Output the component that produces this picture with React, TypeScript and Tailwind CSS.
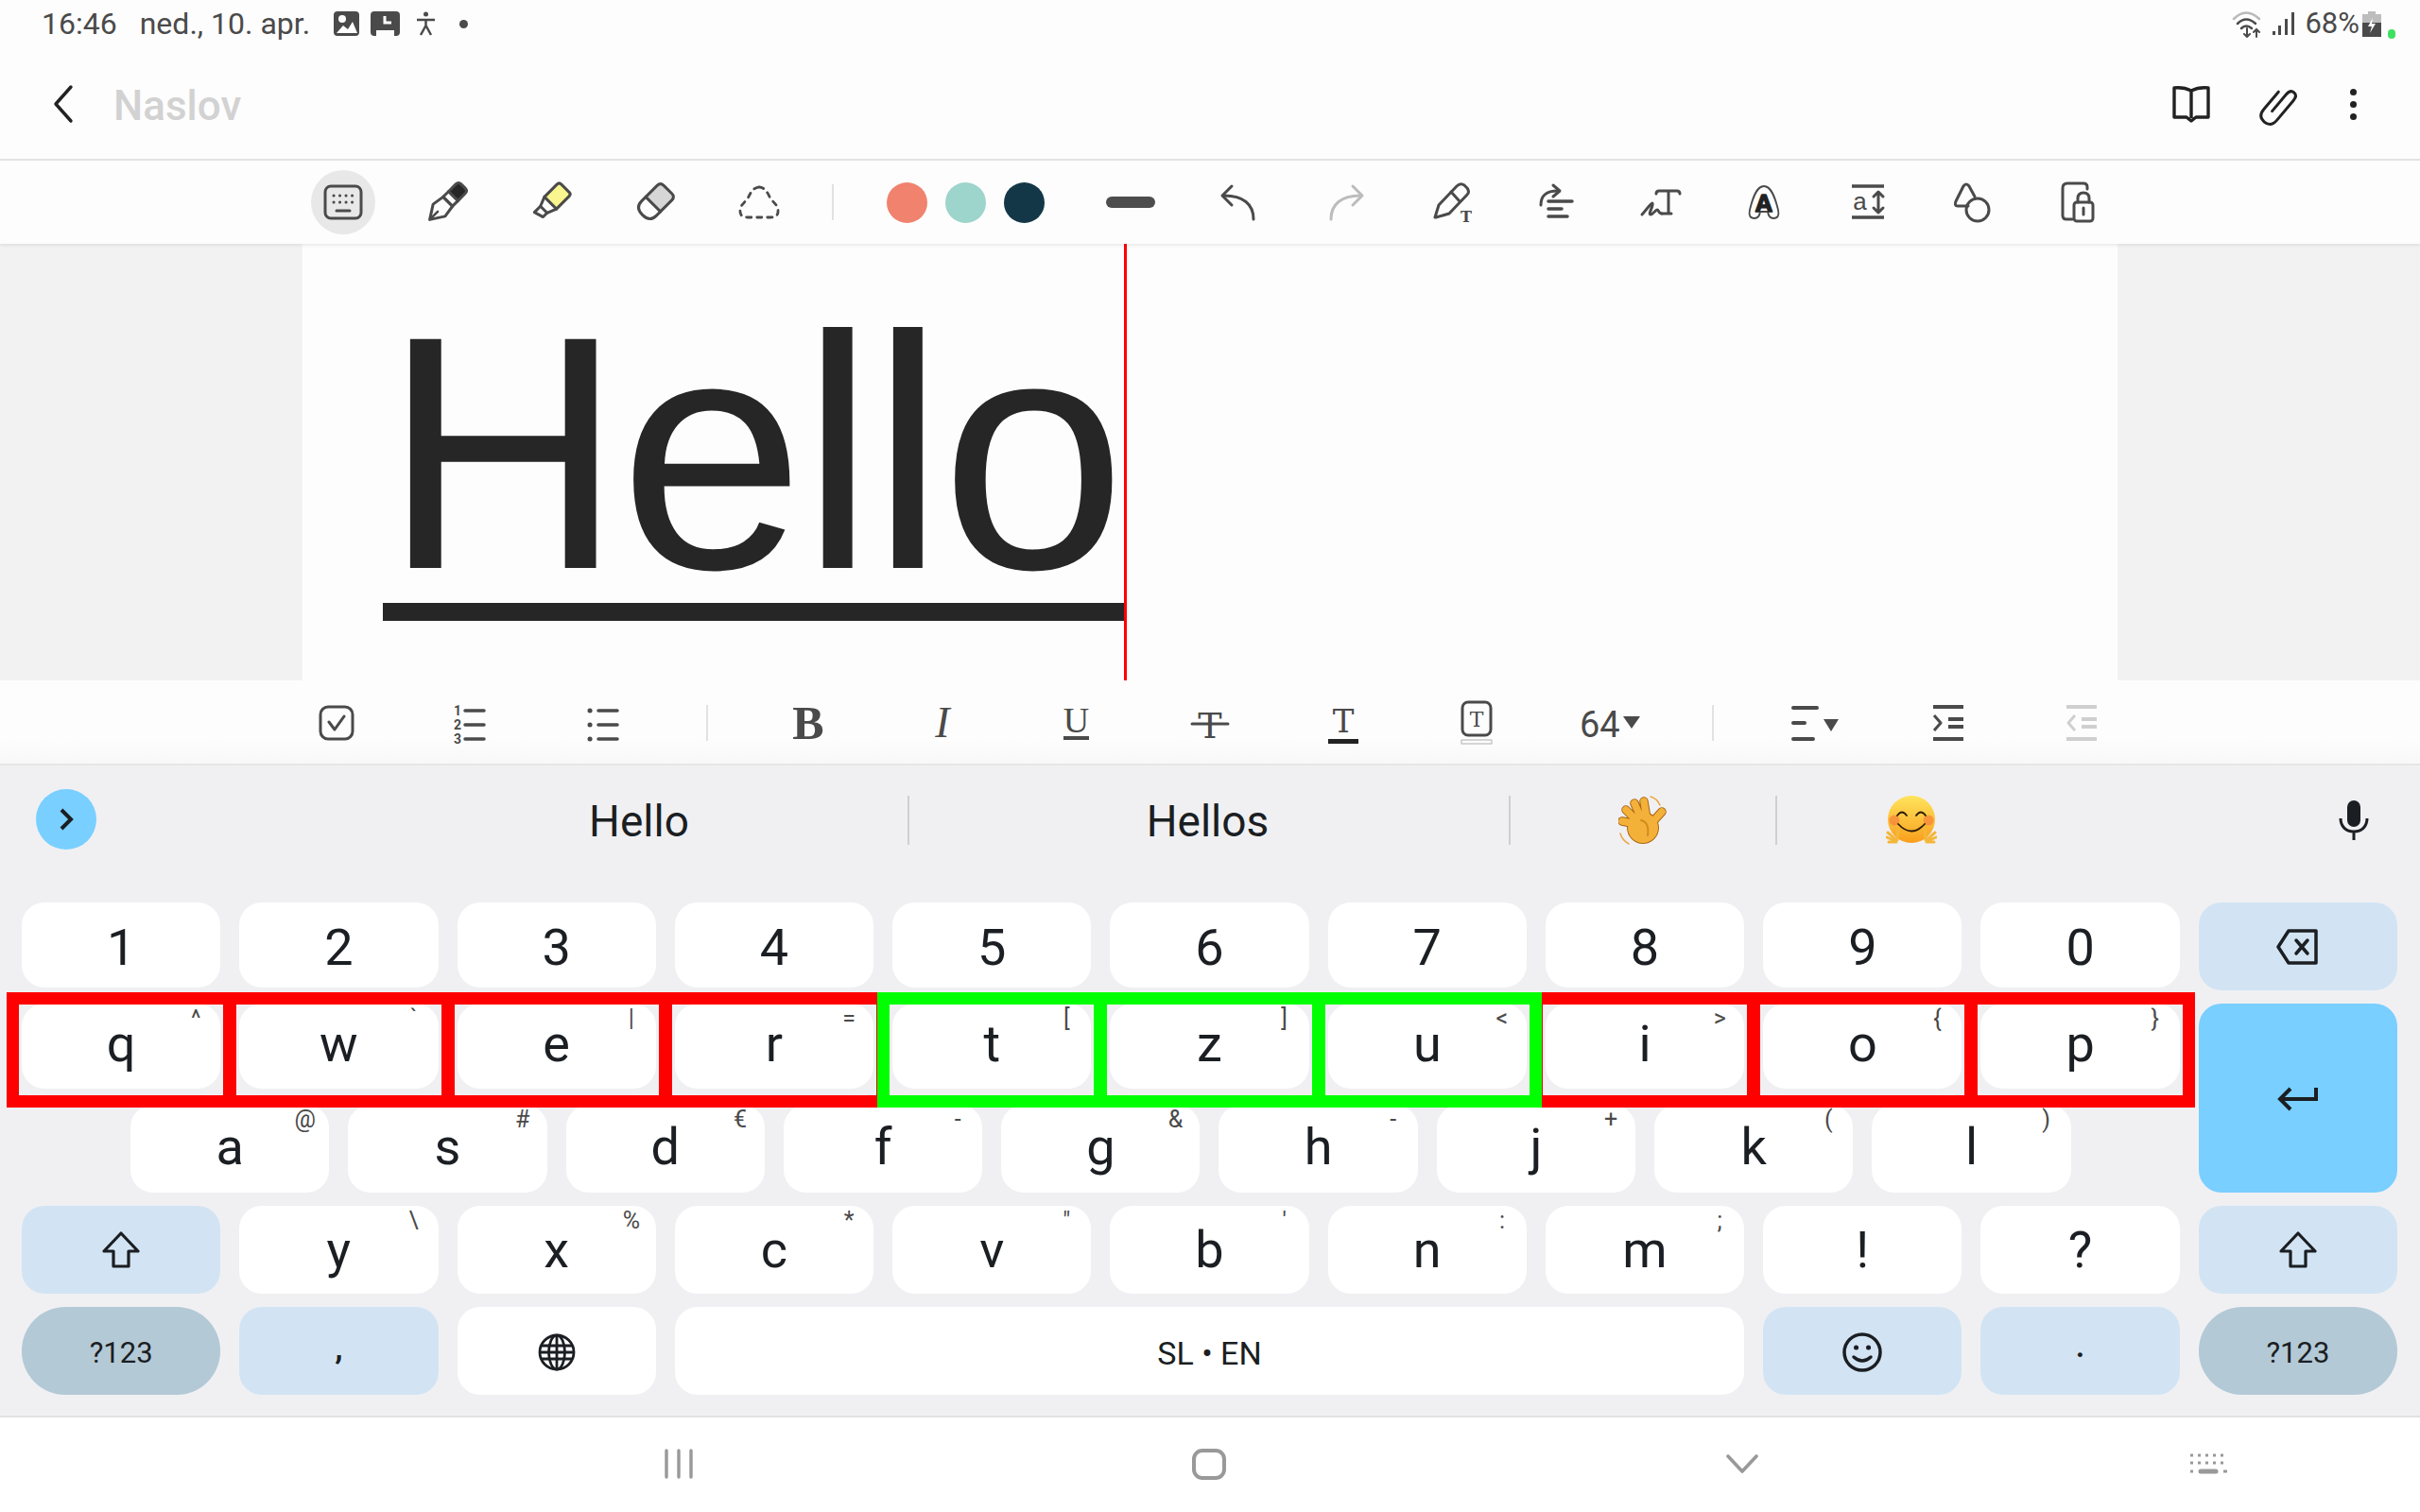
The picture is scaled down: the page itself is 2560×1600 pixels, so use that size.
import type { ReactNode } from 'react';

const INK = '#4a4a4a';

function Icon({ w = 48, h = 48, children }: { w?: number; h?: number; children: ReactNode }) {
  return (
    <svg className="overflow-visible" width={w} height={h} viewBox={`0 0 ${w} ${h}`} fill="none" stroke={INK} strokeWidth={3} strokeLinecap="round" strokeLinejoin="round">
      {children}
    </svg>
  );
}

function Slot({ className, children }: { className: string; children: ReactNode }) {
  return <div className={`flex shrink-0 items-center justify-center ${className}`}>{children}</div>;
}

// --- top toolbar icons ---
const KeyboardIcon = () => (
  <Icon>
    <rect x="5" y="7" width="38" height="34" rx="6" strokeWidth="3" />
    <path d="M14 17h.1M20.500 17h.1M27 17h.1M33.500 17h.1M14 24h.1M20.500 24h.1M27 24h.1M33.500 24h.1" strokeWidth="3" />
    <path d="M17 33h14" strokeWidth="3" />
  </Icon>
);
const PenIcon = () => (
  <Icon>
    <g transform="rotate(45 24 24)">
      <path d="M17 4Q17 0 21 0H27Q31 0 31 4V15H17Z" fill="#262626" />
      <path d="M17 15H31V23H17Z" fill="#fff" />
      <path d="M17 23H31L33 36L24 50L15 36Z" />
      <path d="M24 48V38" strokeWidth="2.500" />
    </g>
  </Icon>
);
const HighlighterIcon = () => (
  <Icon>
    <g transform="rotate(45 24 24)">
      <path d="M15 6Q15 3 18 3H30Q33 3 33 6V25H15Z" fill="#f9f58f" />
      <path d="M15 25L19 35H29L33 25" />
      <path d="M19 35V44L29 41V35" />
    </g>
  </Icon>
);
const EraserIcon = () => (
  <Icon>
    <g transform="rotate(45 24 24)">
      <path d="M13 10Q13 5 18 5H30Q35 5 35 10V27H13Z" fill="#d6d6d6" />
      <path d="M13 27V33Q13 43 24 43Q35 43 35 33V27" />
    </g>
  </Icon>
);
const LassoIcon = () => (
  <Icon>
    <path d="M24 8C30 8 33 14 36 20L43 28Q47 40 36 40H12Q1 40 5 28L12 20C15 14 18 8 24 8Z" strokeDasharray="5 6" strokeWidth="2.800" />
  </Icon>
);
const UndoIcon = () => (
  <Icon>
    <path d="M41 42C41 26 30 17 10 17" />
    <path d="M18 7L8 17L18 27" />
  </Icon>
);
const RedoIcon = () => (
  <Icon>
    <g stroke="#bcbcbc">
      <path d="M7 42C7 26 18 17 38 17" />
      <path d="M30 7L40 17L30 27" />
    </g>
  </Icon>
);
const PenTextIcon = () => (
  <Icon>
    <path d="M5 40L9 27L28 7Q32 3 36 6L39 9Q42 13 39 16L20 36L6 40" />
    <path d="M22 13L31 23" />
    <text x="38" y="45" textAnchor="middle" fontFamily="DejaVu Serif" fontSize="16" fontWeight="700" fill={INK} stroke="none">T</text>
  </Icon>
);
const ReorderIcon = () => (
  <Icon>
    <path d="M8 27C8 17 13 12 26 12" />
    <path d="M21 6L28 12L21 18" />
    <path d="M16 23H41M16 31H30M16 39H36" strokeWidth="3.500" />
  </Icon>
);
const SignTextIcon = () => (
  <Icon>
    <path d="M20 15Q20 12 23 12H42Q45 12 45 15M33 12V36M26 36H36" />
    <path d="M5 37C9 33 14 25 16 25C18 26 11 37 14 37C17 37 19 32 21 32C23 32 22 36 26 36" />
  </Icon>
);
const OutlineAIcon = () => (
  <Icon>
    <path d="M24 7C16 7 12 20 9 32Q7 41 14 41Q19 41 20 34H28Q29 41 34 41Q41 41 39 32C36 20 32 7 24 7Z" strokeWidth="1.800" />
    <text x="24" y="34" textAnchor="middle" fontFamily="Liberation Sans" fontWeight="700" fontSize="26" fill="#222" stroke="#222" strokeWidth="1.500">A</text>
  </Icon>
);
const SpacingIcon = () => (
  <Icon>
    <path d="M7 7H41M7 40H41" strokeWidth="3.500" strokeLinecap="butt" />
    <text x="15.500" y="32" textAnchor="middle" fontFamily="Liberation Sans" fontSize="26" fill={INK} stroke="none">a</text>
    <path d="M35 14V34M30 18L35 13L40 18M30 30L35 35L40 30" strokeWidth="3" />
  </Icon>
);
const ShapesIcon = () => (
  <Icon>
    <path d="M20 28H9Q5 28 7 23L15 7Q18 3 21 7L27 18" />
    <circle cx="30" cy="32" r="12" />
  </Icon>
);
const LockNoteIcon = () => (
  <Icon>
    <path d="M34 10V8Q34 4 30 4H13Q8 4 8 9V38Q8 42 12 42H18" />
    <rect x="20" y="24" width="20" height="20" rx="3" />
    <path d="M24 24V20Q24 14 30 14Q36 14 36 20V24M30 30V37" />
  </Icon>
);

// --- format toolbar icons ---
const CheckIcon = () => (
  <Icon>
    <rect x="7" y="7" width="34" height="34" rx="8" />
    <path d="M16 23L22 31L32 17" />
  </Icon>
);
const OrderedIcon = () => (
  <Icon>
    <text x="10" y="16" textAnchor="middle" fontFamily="Roboto" fontWeight="700" fontSize="14" fill={INK} stroke="none">1</text>
    <text x="10" y="31" textAnchor="middle" fontFamily="Roboto" fontWeight="700" fontSize="14" fill={INK} stroke="none">2</text>
    <text x="10" y="46" textAnchor="middle" fontFamily="Roboto" fontWeight="700" fontSize="14" fill={INK} stroke="none">3</text>
    <path d="M18 11H38M18 26H38M18 41H38" strokeWidth="3.500" />
  </Icon>
);
const BulletIcon = () => (
  <Icon>
    <path d="M9 11h.1M9 26h.1M9 41h.1" strokeWidth="5" />
    <path d="M18 11H38M18 26H38M18 41H38" strokeWidth="3.500" />
  </Icon>
);
const StrikeIcon = () => (
  <Icon>
    <text x="24" y="40" textAnchor="middle" fontFamily="DejaVu Serif" fontSize="38" fill={INK} stroke="none">T</text>
    <path d="M5 25H43" />
  </Icon>
);
const TextColorIcon = () => (
  <Icon>
    <text x="24" y="34" textAnchor="middle" fontFamily="DejaVu Serif" fontSize="34" fill={INK} stroke="none">T</text>
    <rect x="8" y="41" width="32" height="5" fill="#222" stroke="none" />
  </Icon>
);
const TextBgIcon = () => (
  <Icon>
    <rect x="9" y="2" width="30" height="35" rx="6" />
    <text x="24" y="28" textAnchor="middle" fontFamily="DejaVu Serif" fontSize="22" fill={INK} stroke="none">T</text>
    <rect x="8" y="42" width="32" height="4" stroke="#c8c8c8" strokeWidth="1.500" />
  </Icon>
);
const AlignIcon = () => (
  <Icon w={56}>
    <path d="M6 8H31M6 24H18M6 41H27" strokeWidth="4" />
    <path d="M38 20H54L46 33Z" fill={INK} stroke="none" />
  </Icon>
);
const IndentIcon = ({ color = INK, flip = false }: { color?: string; flip?: boolean }) => (
  <Icon>
    <g stroke={color} strokeLinecap="butt">
      <path d="M8 7H40M8 41H40" strokeWidth="4" />
      <path d="M24 20H40M24 28H40" strokeWidth="4" />
      <path d={flip ? 'M17 16L10 24L17 32' : 'M9 16L16 24L9 32'} />
    </g>
  </Icon>
);

// --- keyboard icons ---
const KEY_INK = '#1b1e22';
const BackspaceIcon = () => (
  <svg width="48" height="40" viewBox="0 0 48 40" fill="none" stroke={KEY_INK} strokeWidth="3.500" strokeLinejoin="round" strokeLinecap="round">
    <path d="M14 3H43V37H14L3 20Z" />
    <path d="M22 13L34 27M34 13L22 27" />
  </svg>
);
const EnterIcon = () => (
  <svg width="44" height="28" viewBox="0 0 44 28" fill="none" stroke={KEY_INK} strokeWidth="4">
    <path d="M41 2V14H4" />
    <path d="M14 3L3 14L14 25" />
  </svg>
);
const ShiftIcon = () => (
  <svg width="42" height="40" viewBox="0 0 42 40" fill="none" stroke={KEY_INK} strokeWidth="3.200" strokeLinejoin="round">
    <path d="M21 2L39 21H29V37H13V21H3Z" />
  </svg>
);
const GlobeIcon = () => (
  <svg width="40" height="40" viewBox="0 0 40 40" fill="none" stroke={KEY_INK} strokeWidth="2.800">
    <circle cx="20" cy="20" r="18" />
    <ellipse cx="20" cy="20" rx="8.500" ry="18" />
    <path d="M20 2V38M3 13H37M3 27H37M2 20H38" />
  </svg>
);
const SmileIcon = () => (
  <svg width="44" height="44" viewBox="0 0 44 44" fill="none" stroke={KEY_INK} strokeWidth="3.500" strokeLinecap="round">
    <circle cx="22" cy="22" r="19" />
    <path d="M15.500 17h.1M28.500 17h.1" strokeWidth="5" />
    <path d="M13 27Q22 35 31 27" />
  </svg>
);
const MicIcon = () => (
  <svg width="34" height="42" viewBox="0 0 34 42" fill="none" stroke={KEY_INK} strokeWidth="3">
    <rect x="10" y="0" width="14" height="28" rx="7" fill={KEY_INK} stroke="none" />
    <path d="M3 19C3 28 9 33 17 33C25 33 31 28 31 19M17 33V42" />
  </svg>
);
const WaveEmoji = () => (
  <svg width="52" height="52" viewBox="0 0 52 52" fill="none" strokeLinecap="round">
    <g stroke="#a9650f" strokeWidth="9.500">
      <path d="M19 30L4 27M20 27L8 15M24 24L17 8M30 24L27 6M36 28L46 17" />
    </g>
    <circle cx="26" cy="34" r="17" fill="#a9650f" />
    <g stroke="#f4b13a" strokeWidth="7.500">
      <path d="M19 30L4 27M20 27L8 15M24 24L17 8M30 24L27 6M36 28L46 17" />
    </g>
    <circle cx="26" cy="34" r="16" fill="#f4b13a" />
    <path d="M24 26Q33 28 31 42" stroke="#d58a1d" strokeWidth="2" />
    <path d="M34 1Q41 3 44 10M2 40Q4 47 11 51" stroke="#eaa641" strokeWidth="1.500" />
  </svg>
);
const HugEmoji = () => (
  <svg width="54" height="52" viewBox="0 0 54 52" fill="none" strokeLinecap="round">
    <defs>
      <linearGradient id="hug" x1="0" y1="0" x2="0" y2="1">
        <stop offset="0" stopColor="#ffe45c" />
        <stop offset="1" stopColor="#f99e1c" />
      </linearGradient>
    </defs>
    <circle cx="27" cy="25" r="25" fill="url(#hug)" />
    <circle cx="9" cy="26" r="5.500" fill="#f7813b" opacity="0.7" />
    <circle cx="45" cy="26" r="5.500" fill="#f7813b" opacity="0.7" />
    <path d="M12 21Q17 14 22 21M32 21Q37 14 42 21" stroke="#2b1c08" strokeWidth="1.800" />
    <path d="M13 30Q27 45 41 30" stroke="#2b1c08" strokeWidth="1.800" />
    <g stroke="#f4b73a" strokeWidth="3">
      <path d="M12 47L13 35M10 46L2 39M10 48L1 44M11 49L3 49" />
      <path d="M42 47L41 35M44 46L52 39M44 48L53 44M43 49L51 49" />
    </g>
  </svg>
);

type Tone = 'white' | 'soft' | 'pill' | 'enter';

const TONES: Record<Tone, string> = {
  white: 'bg-white',
  soft: 'bg-[#d2e4f3]',
  pill: 'bg-[#b3c9d6]',
  enter: 'bg-[#79cfff]',
};

function Key({
  children,
  hint,
  tone = 'white',
  className = 'col-span-2',
  frame,
}: {
  children: ReactNode;
  hint?: string;
  tone?: Tone;
  className?: string;
  frame?: 'red' | 'green';
}) {
  return (
    <div
      className={`relative flex items-center justify-center text-[#1b1e22] ${tone === 'pill' ? 'rounded-[46px]' : 'rounded-[24px]'} ${TONES[tone]} ${className}`}
    >
      {children}
      {hint && (
        <span className="absolute top-[3px] right-[15px] w-[22px] text-center text-[25px] leading-[26px] text-[#4a4a4a]">
          {hint}
        </span>
      )}
      {frame === 'red' && <span className="absolute -top-[12px] -right-[16px] -bottom-[20px] -left-[16px] z-10 border-[13px] border-[#ff0000]" />}
      {frame === 'green' && <span className="absolute -top-[12px] -right-[16px] -bottom-[20px] -left-[16px] z-20 border-[13px] border-[#00ff00]" />}
    </div>
  );
}

const DIGITS = ['1', '2', '3', '4', '5', '6', '7', '8', '9', '0'];
const QWERTZ: [string, string, 'red' | 'green'][] = [
  ['q', '^', 'red'],
  ['w', '`', 'red'],
  ['e', '|', 'red'],
  ['r', '=', 'red'],
  ['t', '[', 'green'],
  ['z', ']', 'green'],
  ['u', '<', 'green'],
  ['i', '>', 'red'],
  ['o', '{', 'red'],
  ['p', '}', 'red'],
];
const HOME_ROW: [string, string][] = [
  ['a', '@'],
  ['s', '#'],
  ['d', '€'],
  ['f', '-'],
  ['g', '&'],
  ['h', '-'],
  ['j', '+'],
  ['k', '('],
  ['l', ')'],
];
const BOTTOM_ROW: [string, string?][] = [
  ['y', '\\'],
  ['x', '%'],
  ['c', '*'],
  ['v', '"'],
  ['b', "'"],
  ['n', ':'],
  ['m', ';'],
  ['!'],
  ['?'],
];

function Keyboard() {
  return (
    <div className="grid grid-cols-[repeat(22,minmax(0,1fr))] grid-rows-[repeat(5,93px)] gap-x-[20px] gap-y-[14px] pr-[24px] pl-[23px] text-[54px] leading-none">
      {DIGITS.map((d) => (
        <Key key={d} className="col-span-2 mb-[3px] pt-[6px]">
          {d}
        </Key>
      ))}
      <Key tone="soft">
        <BackspaceIcon />
      </Key>

      {QWERTZ.map(([l, h, frame]) => (
        <Key key={l} hint={h} frame={frame} className="col-span-2 mb-[3px] pb-[4px]">
          {l}
        </Key>
      ))}
      <Key tone="enter" className="col-span-2 row-span-2">
        <span className="pt-[2px]">
          <EnterIcon />
        </span>
      </Key>

      {HOME_ROW.map(([l, h], i) => (
        <Key key={l} hint={h} className={i === 0 ? 'col-span-2 col-start-2 pb-[3px]' : 'col-span-2 pb-[3px]'}>
          {l}
        </Key>
      ))}

      <Key tone="soft" className="col-span-2 col-start-1">
        <ShiftIcon />
      </Key>
      {BOTTOM_ROW.map(([l, h]) => (
        <Key key={l} hint={h} className="col-span-2">
          {l}
        </Key>
      ))}
      <Key tone="soft">
        <ShiftIcon />
      </Key>

      <Key tone="pill" className="col-span-2 pt-[4px]">
        <span className="text-[31px]">?123</span>
      </Key>
      <Key tone="soft" className="col-span-2">
        <span className="pb-[8px] text-[34px] font-bold">,</span>
      </Key>
      <Key className="col-span-2 pt-[2px]">
        <GlobeIcon />
      </Key>
      <Key className="col-span-10 pt-[4px]">
        <span className="text-[34px]">SL • EN</span>
      </Key>
      <Key tone="soft" className="col-span-2 pt-[2px]">
        <SmileIcon />
      </Key>
      <Key tone="soft" className="col-span-2">
        <span className="pb-[12px] text-[36px] font-medium">.</span>
      </Key>
      <Key tone="pill" className="col-span-2 pt-[4px]">
        <span className="text-[31px]">?123</span>
      </Key>
    </div>
  );
}

function StatusBar() {
  return (
    <div className="flex h-[50px] items-center pl-[44px] text-[32px] text-[#4a4a4a]">
      <span>16:46</span>
      <span className="ml-[24px]">ned., 10. apr.</span>
      <svg className="ml-[25px]" width="27" height="26" viewBox="0 0 27 26">
        <rect width="27" height="26" rx="4" fill="#4a4a4a" />
        <circle cx="9" cy="8" r="4" fill="#fff" />
        <path d="M3 23L10 15L15 19L20 11L25 23Z" fill="#fff" />
      </svg>
      <svg className="ml-[12px]" width="31" height="26" viewBox="0 0 31 26">
        <path d="M4 0H27Q31 0 31 4V22Q31 26 27 26H25V20H6V26H4Q0 26 0 22V4Q0 0 4 0Z" fill="#4a4a4a" />
        <path d="M15 5V12H22" stroke="#fff" strokeWidth="3" fill="none" />
      </svg>
      <svg className="ml-[18px]" width="19" height="26" viewBox="0 0 19 26" fill="#4a4a4a" stroke="#4a4a4a" strokeWidth="2.500">
        <circle cx="9.500" cy="3" r="2.500" stroke="none" />
        <path d="M0 9H19M9.500 9V15M9.500 15L4 25M9.500 15L15 25" fill="none" />
      </svg>
      <span className="ml-[26px] h-[9px] w-[9px] rounded-full bg-[#4a4a4a]" />
      <div className="ml-auto flex items-center">
        <svg width="34" height="30" viewBox="0 0 34 30" fill="none" strokeLinecap="round">
          <path d="M2 10Q15 -3 29 10" stroke="#b9b9b9" strokeWidth="2.500" />
          <path d="M6 15Q15 6 25 15M10 20Q15 15 21 20" stroke="#4a4a4a" strokeWidth="2.500" />
          <path d="M16 20V29M13 26L16 29L19 26M26 29V21M23 24L26 21L29 24" stroke="#4a4a4a" strokeWidth="2" />
        </svg>
        <svg className="ml-[9px]" width="24" height="26" viewBox="0 0 24 26" fill="#4a4a4a">
          <rect x="0" y="21" width="3" height="4" />
          <rect x="6" y="15" width="3" height="10" />
          <rect x="13" y="8" width="3" height="17" />
          <rect x="20" y="1" width="3" height="24" />
        </svg>
        <span className="ml-[10px] text-[31px]">68%</span>
        <svg className="ml-[3px]" width="20" height="27" viewBox="0 0 20 27">
          <path d="M6 0H14V3H20V27H0V3H6Z" fill="#bdbdbd" />
          <path d="M0 12H20V27H0Z" fill="#4a4a4a" />
          <path d="M11 7L6 16H10L8 23L14 13H10Z" fill="#fff" />
        </svg>
        <span className="mt-[22px] mr-[26px] ml-[7px] h-[10px] w-[8px] rounded-full bg-[#3fe060]" />
      </div>
    </div>
  );
}

function Header() {
  return (
    <header className="flex h-[120px] items-center border-b-2 border-[#e3e3e3] bg-[#fdfdfd] pt-[2px]">
      <svg className="ml-[54px]" width="26" height="42" viewBox="0 0 26 42" fill="none" stroke="#222" strokeWidth="3.400" strokeLinecap="round" strokeLinejoin="round">
        <path d="M21 3L5 21L21 39" />
      </svg>
      <h1 className="ml-[40px] pt-[4px] text-[44px] font-medium text-[#d2d2d2]">Naslov</h1>
      <svg className="ml-auto" width="42" height="40" viewBox="0 0 42 40" fill="none" stroke="#222" strokeWidth="3.400" strokeLinejoin="round">
        <path d="M21 6V35M21 6Q13 2 3 3V34H16L21 38L26 34H39V3Q29 2 21 6Z" />
      </svg>
      <svg className="ml-[49px] overflow-visible" width="44" height="44" viewBox="0 0 44 44" fill="none" stroke="#222" strokeWidth="3" strokeLinecap="round" strokeLinejoin="round">
        <g transform="rotate(40 22 22)">
          <path d="M22 32V9Q22 2 27 2Q32 2 32 9V36Q32 46 23 46Q14 46 14 36V12" />
        </g>
      </svg>
      <div className="mr-[67px] ml-[54px] flex flex-col gap-[6px]">
        <span className="h-[7px] w-[7px] rounded-full bg-[#222]" />
        <span className="h-[7px] w-[7px] rounded-full bg-[#222]" />
        <span className="h-[7px] w-[7px] rounded-full bg-[#222]" />
      </div>
    </header>
  );
}

function PenToolbar() {
  const tools = [<KeyboardIcon key="k" />, <PenIcon key="p" />, <HighlighterIcon key="h" />, <EraserIcon key="e" />, <LassoIcon key="l" />];
  const actions: [string, ReactNode][] = [
    ['w-[114px]', <UndoIcon key="u" />],
    ['w-[118px]', <RedoIcon key="r" />],
    ['w-[106px]', <PenTextIcon key="pt" />],
    ['w-[112px]', <ReorderIcon key="ro" />],
    ['w-[108px]', <SignTextIcon key="st" />],
    ['w-[112px]', <OutlineAIcon key="oa" />],
    ['w-[108px]', <SpacingIcon key="sp" />],
    ['w-[112px]', <ShapesIcon key="sh" />],
    ['w-[112px]', <LockNoteIcon key="ln" />],
  ];
  return (
    <div className="relative z-10 flex h-[88px] items-center bg-[#fdfdfd] pl-[308px] shadow-[0_2px_3px_rgba(0,0,0,0.07)]">
      {tools.map((t, i) => (
        <Slot key={i} className={i === 0 ? 'h-[68px] w-[110px]' : 'w-[110px]'}>
          {i === 0 ? <div className="flex h-[68px] w-[68px] items-center justify-center rounded-full bg-[#e8e8e8]">{t}</div> : t}
        </Slot>
      ))}
      <span className="ml-[22px] h-[38px] w-[2px] bg-[#e2e2e2]" />
      <span className="ml-[56px] h-[43px] w-[43px] rounded-full bg-[#f0826e]" />
      <span className="ml-[19px] h-[43px] w-[43px] rounded-full bg-[#9dd4cb]" />
      <span className="ml-[19px] h-[43px] w-[43px] rounded-full bg-[#133747]" />
      <span className="ml-[65px] h-[12px] w-[52px] rounded-full bg-[#4d4d4d]" />
      <div className="ml-[30px] flex">
        {actions.map(([width, icon], i) => (
          <Slot key={i} className={width}>
            {icon}
          </Slot>
        ))}
      </div>
    </div>
  );
}

function Canvas() {
  return (
    <div className="flex h-[462px] justify-center bg-[#f2f2f2]">
      <div className="flex w-[1920px] bg-[#fdfdfd] pl-[85px]">
        <div className="pt-[62px]">
          <div className="h-[337px] w-[784px] border-b-[19px] border-[#262626] font-['Liberation_Sans',sans-serif] text-[352px] leading-[318px] tracking-[-4px] whitespace-nowrap text-[#262626]">
            Hello
          </div>
        </div>
        <span className="w-[3px] bg-[#f00]" />
      </div>
    </div>
  );
}

function FormatToolbar() {
  return (
    <div className="mt-[2px] flex h-[88px] items-center border-b-2 border-[#e6e6e6] bg-gradient-to-b from-[#fdfdfd] from-70% to-[#f8f8f8] pb-[1px] pl-[285px]">
      <Slot className="w-[142px]">
        <CheckIcon />
      </Slot>
      <Slot className="w-[141px]">
        <OrderedIcon />
      </Slot>
      <Slot className="w-[141px]">
        <BulletIcon />
      </Slot>
      <span className="ml-[38px] h-[38px] w-[2px] bg-[#e2e2e2]" />
      <Slot className="ml-[35px] w-[142px]">
        <span className="font-['Liberation_Serif',serif] text-[50px] leading-none font-bold text-[#4a4a4a]">B</span>
      </Slot>
      <Slot className="w-[142px]">
        <span className="font-['Liberation_Serif',serif] text-[46px] leading-none text-[#4a4a4a] italic">I</span>
      </Slot>
      <Slot className="w-[141px]">
        <span className="border-b-[4px] border-[#4a4a4a] font-['Liberation_Serif',serif] text-[38px] leading-[33px] text-[#4a4a4a]">U</span>
      </Slot>
      <Slot className="w-[141px]">
        <StrikeIcon />
      </Slot>
      <Slot className="w-[141px]">
        <TextColorIcon />
      </Slot>
      <Slot className="w-[141px]">
        <TextBgIcon />
      </Slot>
      <span className="ml-[39px] w-[38px] pt-[4px] text-[38px] leading-none text-[#4a4a4a]">64</span>
      <span className="ml-[8px] h-0 w-0 border-x-[9px] border-t-[13px] border-x-transparent border-t-[#4a4a4a]" />
      <span className="ml-[76px] h-[38px] w-[2px] bg-[#e2e2e2]" />
      <Slot className="ml-[35px] w-[142px]">
        <AlignIcon />
      </Slot>
      <Slot className="w-[141px]">
        <IndentIcon />
      </Slot>
      <Slot className="w-[141px]">
        <IndentIcon color="#cfcfcf" flip />
      </Slot>
    </div>
  );
}

function Suggestions() {
  return (
    <div className="flex h-[145px] items-start pt-[25px] pl-[38px]">
      <div className="flex h-[64px] w-[64px] items-center justify-center rounded-full bg-[#79cfff]">
        <svg width="18" height="26" viewBox="0 0 18 26" fill="none" stroke="#1b1e22" strokeWidth="4">
          <path d="M4 3L14 13L4 23" />
        </svg>
      </div>
      <div className="mt-[7px] ml-[290px] flex h-[52px] items-center text-[46px] text-[#1b1e22]">
        <span className="w-[568px] pt-[3px] text-center">Hello</span>
        <span className="h-full w-[2px] bg-[#cfcfd2]" />
        <span className="w-[634px] pt-[3px] pr-[3px] text-center">Hellos</span>
        <span className="h-full w-[2px] bg-[#cfcfd2]" />
        <Slot className="w-[280px]">
          <WaveEmoji />
        </Slot>
        <span className="h-full w-[2px] bg-[#cfcfd2]" />
        <Slot className="w-[284px]">
          <HugEmoji />
        </Slot>
        <Slot className="ml-[309px] w-[34px]">
          <MicIcon />
        </Slot>
      </div>
    </div>
  );
}

function NavBar() {
  return (
    <nav className="flex h-[102px] items-center border-t-2 border-[#e2e2e4] bg-white pb-[2px] pl-[702px]">
      <svg width="32" height="32" viewBox="0 0 32 32" fill="none" stroke="#999" strokeWidth="3.400" strokeLinecap="round">
        <path d="M3 2V30M16 2V30M29 2V30" />
      </svg>
      <span className="ml-[527px] h-[33px] w-[36px] rounded-[11px] border-[4px] border-[#999]" />
      <svg className="ml-[529px]" width="34" height="20" viewBox="0 0 34 20" fill="none" stroke="#999" strokeWidth="3.600" strokeLinecap="round" strokeLinejoin="round">
        <path d="M2 2L17 18L32 2" />
      </svg>
      <svg className="ml-[456px]" width="40" height="22" viewBox="0 0 40 22" fill="none" stroke="#999" strokeWidth="3" strokeDasharray="3 5">
        <path d="M1 2H40M1 10H40" />
        <path d="M1 19H4M36 19H40" strokeDasharray="none" />
        <path d="M12 19H28" strokeWidth="5" strokeDasharray="none" strokeLinecap="round" />
      </svg>
    </nav>
  );
}

export default function App() {
  return (
    <div className="flex h-[1600px] w-[2560px] flex-col overflow-hidden bg-[#fdfdfd] font-['Roboto',sans-serif]">
      <StatusBar />
      <Header />
      <PenToolbar />
      <Canvas />
      <FormatToolbar />
      <div className="flex-1 bg-[#f0f0f3]">
        <Suggestions />
        <Keyboard />
      </div>
      <NavBar />
    </div>
  );
}
